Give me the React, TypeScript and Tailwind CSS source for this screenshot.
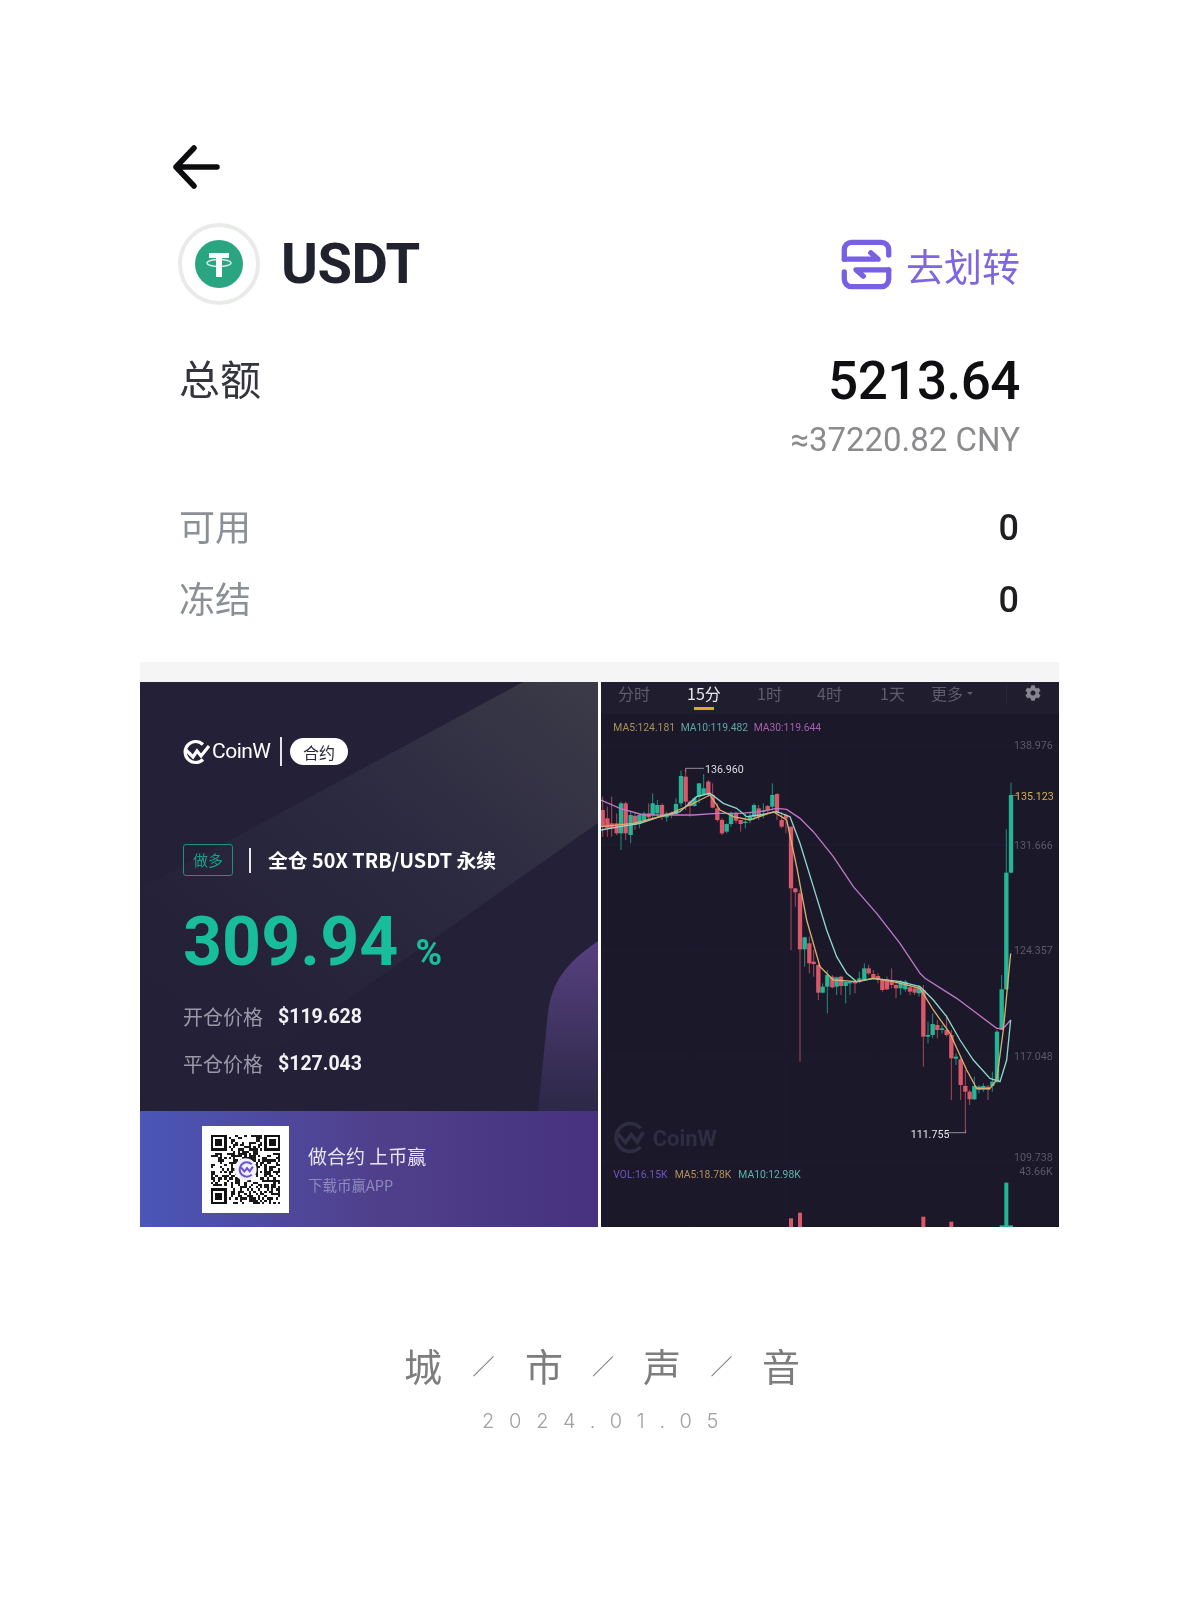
import { FaCog } from "react-icons/fa";

const SANS = "font-['Roboto','Noto_Sans_CJK_SC',sans-serif]";
const CJK = "font-['Noto_Sans_CJK_SC','Noto_Sans',sans-serif]";

type C = [number, number, number, number, number, "r" | "g"];
const L = 810;
const candles: C[] = [
  [8,350,470,390,440,"r"],[22,380,470,415,445,"r"],[35,350,470,430,445,"r"],[50,400,465,430,460,"r"],[63,365,510,370,460,"g"],[77,365,480,370,460,"r"],
  [92,395,490,405,465,"g"],[105,400,450,408,435,"r"],[118,400,445,405,430,"g"],[132,395,425,400,420,"g"],[146,370,420,400,412,"r"],[158,340,420,370,405,"g"],
  [172,360,410,375,400,"g"],[186,370,420,375,410,"r"],[200,395,425,400,412,"g"],[214,395,415,398,405,"r"],[228,355,405,372,402,"g"],[243,272,380,288,370,"g"],
  [257,265,390,290,365,"r"],[270,360,410,365,378,"r"],[283,350,380,355,378,"g"],[297,310,370,310,350,"g"],[311,282,345,325,345,"g"],[325,300,350,305,345,"r"],
  [338,310,385,345,383,"r"],[352,370,425,385,420,"r"],[366,415,465,420,460,"r"],[380,430,460,432,455,"g"],[393,395,440,400,432,"g"],[408,395,430,400,422,"r"],
  [422,420,455,420,432,"r"],[436,400,445,425,425,"g"],[450,395,430,410,420,"g"],[462,370,420,375,410,"g"],[476,375,420,385,410,"r"],[490,370,415,395,392,"g"],
  [503,375,400,378,392,"r"],[517,310,390,345,380,"g"],[531,340,420,342,400,"r"],[545,395,445,420,440,"r"],[558,400,460,405,415,"r"],[573,440,810,440,625,"r"],
  [586,625,680,625,637,"r"],[600,630,1145,640,808,"r"],[614,770,860,772,808,"g"],[628,770,880,790,850,"r"],[641,810,890,845,852,"r"],
  [655,L+40,L+150,L+45,L+128,"r"],[668,L+100,L+130,L+110,L+128,"g"],[682,L+60,L+190,L+75,L+110,"g"],[697,L+75,L+115,L+80,L+112,"r"],[710,L+80,L+135,L+82,L+110,"g"],
  [723,L+78,L+135,L+80,L+108,"r"],[737,L+95,L+160,L+96,L+108,"g"],[750,L+95,L+135,L+96,L+100,"g"],[765,L+90,L+130,L+95,L+100,"r"],[778,L+65,L+100,L+85,L+95,"g"],
  [793,L+40,L+90,L+55,L+90,"g"],[806,L+45,L+75,L+55,L+70,"r"],[820,L+60,L+90,L+72,L+85,"r"],[834,L+70,L+100,L+78,L+90,"r"],[847,L+85,L+125,L+88,L+120,"r"],
  [861,L+80,L+120,L+88,L+118,"r"],[875,L+55,L+115,L+90,L+105,"r"],[888,L+90,L+145,L+105,L+115,"r"],[902,L+90,L+135,L+95,L+115,"g"],[916,L+90,L+125,L+95,L+118,"g"],
  [930,L+105,L+135,L+112,L+125,"r"],[944,L+108,L+135,L+115,L+128,"r"],[957,L+105,L+140,L+112,L+130,"g"],[970,L+105,L+350,L+120,L+260,"r"],[984,L+215,L+280,L+255,L+260,"g"],
  [998,L+190,L+265,L+222,L+255,"g"],[1012,L+210,L+265,L+225,L+240,"r"],[1026,L+225,L+250,L+235,L+240,"g"],[1040,L+195,L+260,L+240,L+255,"r"],[1054,L+240,L+450,L+255,L+325,"r"],
  [1068,L+310,L+345,L+320,L+326,"g"],[1082,L+320,L+450,L+328,L+405,"r"],[1096,L+360,L+550,L+408,L+425,"r"],[1109,L+420,L+465,L+425,L+448,"r"],[1123,L+380,L+450,L+408,L+448,"g"],
  [1137,L+405,L+430,L+410,L+420,"g"],[1150,L+400,L+425,L+408,L+420,"g"],[1164,L+405,L+450,L+410,L+420,"r"],[1177,L+365,L+425,L+395,L+408,"g"],[1191,L+240,L+400,L+245,L+395,"g"],
  [1205,L+75,L+240,L+118,L+240,"g"],[1219,448,L+120,578,L+118,"g"],[1233,308,580,345,578,"g"],
];
const pts = (a: number[][]) => a.map((p) => p.join(",")).join(" ");
const ma30 = [[3,360],[60,385],[130,405],[200,405],[280,405],[350,400],[420,400],[480,395],[530,385],[560,388],[600,415],[640,455],[700,530],[760,620],[830,700],[900,790],[960,880],[975,895],[1070,955],[1130,1000],[1190,1045],[1210,1045],[1232,1020]];
const ma10 = [[3,450],[60,440],[120,430],[180,410],[240,395],[290,350],[330,340],[370,370],[410,385],[440,410],[480,405],[530,395],[570,410],[600,490],[640,620],[680,750],[710,830],[740,880],[770,905],[820,895],[900,905],[960,920],[1000,960],[1040,1010],[1080,1080],[1120,1140],[1170,1195],[1200,1205],[1220,1140],[1232,1020]];
const ma5 = [[3,440],[100,430],[200,405],[270,375],[330,345],[360,390],[400,410],[450,420],[520,395],[560,420],[590,560],[620,720],[660,860],[700,900],[770,905],[820,895],[880,905],[960,925],[1000,990],[1050,1060],[1100,1170],[1130,1225],[1170,1225],[1190,1200],[1210,1050],[1232,820]];

function Chart() {
  return (
    <svg viewBox="3 102 1374 1539" className="w-[458px] h-[513px] block" fontFamily="Roboto, sans-serif" fontSize="32">
      {[197, 495, 812, 1128, 1445].map((y) => <line key={y} x1="3" x2="1377" y1={y} y2={y} stroke="#222037" strokeWidth="2" />)}
      {[270, 555, 820, 1105].map((x) => <line key={x} x1={x} x2={x} y1="102" y2="1641" stroke="#1f1d31" strokeWidth="2" />)}
      <g fontSize="31">
        <text x="40" y="152" fill="#a8945a">MA5:124.181</text>
        <text x="242" y="152" fill="#5fa9a5">MA10:119.482</text>
        <text x="461" y="152" fill="#a85fb0">MA30:119.644</text>
        <text x="40" y="1494" fill="#7258c0">VOL:16.15K</text>
        <text x="224" y="1494" fill="#b4925a">MA5:18.78K</text>
        <text x="415" y="1494" fill="#5fb3ad">MA10:12.98K</text>
      </g>
      <g textAnchor="end" fill="#5b5967">
        <text x="1358" y="208">138.976</text>
        <text x="1358" y="506">131.666</text>
        <text x="1358" y="823">124.357</text>
        <text x="1358" y="1139">117.048</text>
        <text x="1358" y="1443">109.738</text>
        <text x="1358" y="1486">43.66K</text>
      </g>
      <text x="1361" y="359" textAnchor="end" fill="#d6b04f">135.123</text>
      <line x1="1240" x2="1254" y1="346" y2="346" stroke="#d6b04f" strokeWidth="2" />
      <path d="M257 275V265H312" fill="none" stroke="#c9c9d0" strokeWidth="2" />
      <text x="315" y="279" fill="#dcdce0">136.960</text>
      <path d="M1097 1350V1358H1040" fill="none" stroke="#c9c9d0" strokeWidth="2" />
      <text x="932" y="1373" fill="#e4e4e8">111.755</text>
      <g fill="none" stroke="#2f2d42" strokeWidth="11">
        <path d="M122 1345A42 42 0 1 0 122 1400" />
        <path d="M54 1362L76 1388L94 1364L112 1386L130 1356" />
      </g>
      <text x="158" y="1399" fill="#2f2d42" fontSize="66" fontWeight="700">CoinW</text>
      {candles.map(([x, wt, wb, bt, bb, c], i) => {
        const col = c === "r" ? "#d9586a" : "#25b596";
        return (
          <g key={i}>
            <line x1={x} x2={x} y1={wt} y2={wb} stroke={col} strokeWidth="3" opacity="0.75" />
            <rect x={x - 6.5} y={Math.min(bt, bb)} width="13" height={Math.max(Math.abs(bb - bt), 4)} fill={col} />
          </g>
        );
      })}
      <polyline points={pts(ma30)} fill="none" stroke="#c078c8" strokeWidth="4" />
      <polyline points={pts(ma10)} fill="none" stroke="#8fd8cc" strokeWidth="4" />
      <polyline points={pts(ma5)} fill="none" stroke="#d8b070" strokeWidth="4" />
      {[[573,1615],[600,1598],[970,1610],[1054,1625]].map(([x, y]) => <rect key={x} x={x - 6} y={y} width="12" height={1641 - y} fill="#d9586a" />)}
      <rect x="1213" y="1508" width="12" height="133" fill="#25b596" />
      <rect x="1199" y="1636" width="40" height="5" fill="#25b596" />
    </svg>
  );
}

function Qr() {
  const n = 31;
  let s = 20240105;
  const rnd = () => { s = (s * 1664525 + 1013904223) >>> 0; return (s >>> 16) / 65535; };
  const cells: [number, number][] = [];
  const inF = (x: number, y: number) => (x < 8 && y < 8) || (x >= n - 8 && y < 8) || (x < 8 && y >= n - 8);
  for (let y = 0; y < n; y++) for (let x = 0; x < n; x++) if (!inF(x, y) && rnd() > 0.5) cells.push([x, y]);
  const finders = [[0, 0], [n - 7, 0], [0, n - 7]];
  return (
    <svg viewBox={`-4 -4 ${n + 8} ${n + 8}`} className="w-[87px] h-[87px] bg-white shrink-0 block" shapeRendering="crispEdges">
      {cells.map(([x, y]) => <rect key={`${x}-${y}`} x={x} y={y} width="1" height="1" fill="#1a1a1a" />)}
      {finders.map(([x, y]) => (
        <g key={`${x}${y}`}>
          <rect x={x + 0.5} y={y + 0.5} width="6" height="6" fill="none" stroke="#111" />
          <rect x={x + 2} y={y + 2} width="3" height="3" fill="#111" />
        </g>
      ))}
      <g shapeRendering="auto">
        <circle cx={n / 2} cy={n / 2} r="5" fill="#f3f1fb" />
        <path d="M18.3 13.2A3.2 3.2 0 1 0 18.3 17.8" fill="none" stroke="#6a52d8" strokeWidth="0.9" />
        <path d="M13.5 14.6L15 16.4L16.2 14.9L17.4 16.3L18.8 14.2" fill="none" stroke="#6a52d8" strokeWidth="0.9" />
      </g>
    </svg>
  );
}

function LeftPanel() {
  return (
    <div className={`relative w-[458px] h-[545px] bg-[#232038] flex flex-col overflow-hidden ${SANS}`}>
      <svg viewBox="0 0 458 429" className="absolute left-0 top-0 w-[458px] h-[429px]">
        <defs>
          <linearGradient id="bandG" x1="1" y1="0" x2="0" y2="1">
            <stop offset="0" stopColor="#3c3b48" />
            <stop offset="0.42" stopColor="#2c2a40" />
            <stop offset="0.8" stopColor="#242139" />
            <stop offset="1" stopColor="#232038" />
          </linearGradient>
          <linearGradient id="purpG" x1="0" y1="0" x2="0" y2="1">
            <stop offset="0" stopColor="#56407f" />
            <stop offset="1" stopColor="#2c2846" />
          </linearGradient>
        </defs>
        <polygon points="383,0 458,0 458,141 140,365 0,365 0,207" fill="url(#bandG)" />
        <path d="M458 259C425 282 412 300 408 330L398 429H458Z" fill="url(#purpG)" />
      </svg>
      <div className="relative h-[429px] pl-[42px] flex flex-col">
        <div className="mt-[55px] h-[29px] flex items-center">
          <svg viewBox="0 0 28 28" className="w-[28px] h-[28px]">
            <path d="M21 6.5A10.5 10.5 0 1 0 21 21.5" fill="none" stroke="#fff" strokeWidth="3.2" />
            <path d="M4 12L11 19L15 13L19 18L27 8" fill="none" stroke="#fff" strokeWidth="3.2" />
          </svg>
          <span className="ml-[2px] text-white text-[21px] tracking-[-0.5px] w-[63px]">CoinW</span>
          <div className="ml-[5px] w-[2px] h-[29px] bg-[#e5e5ea]" />
          <div className={`ml-[8px] w-[58px] h-[27px] rounded-full bg-white text-[#2a2838] text-[16px] flex items-center justify-center ${CJK}`}>合约</div>
        </div>
        <div className="mt-[78px] ml-[1px] h-[32px] flex items-center">
          <div className={`w-[50px] h-[32px] border border-[#1f8f84] rounded-[3px] text-[#1c9c89] text-[15px] flex items-center justify-center ${CJK}`}>做多</div>
          <div className="ml-[16px] w-[2px] h-[25px] bg-[#e8e8ee]" />
          <div className={`ml-[17px] text-white text-[19.8px] font-bold whitespace-nowrap ${CJK}`}>全仓 50X TRB/USDT 永续</div>
        </div>
        <div className="mt-[30px] ml-[1px] h-[72px] flex items-baseline text-[#18bd9b] font-bold">
          <span className="text-[68px] leading-[72px] tracking-[0.1px]">309.94</span>
          <span className="ml-[17px] text-[36px] leading-[36px]">%</span>
        </div>
        <div className="mt-[24px] ml-[1px] h-[30px] flex items-center">
          <span className={`text-[#9a99a8] text-[20px] w-[95px] ${CJK}`}>开仓价格</span>
          <span className="text-[#f2f2f5] text-[19.5px] font-bold">$119.628</span>
        </div>
        <div className="mt-[17px] ml-[1px] h-[30px] flex items-center">
          <span className={`text-[#9a99a8] text-[20px] w-[95px] ${CJK}`}>平仓价格</span>
          <span className="text-[#f2f2f5] text-[19.5px] font-bold">$127.043</span>
        </div>
      </div>
      <div className="relative h-[116px] bg-gradient-to-r from-[#4a56b8] via-[#50408c] to-[#46327e] pl-[62px] flex items-center">
        <Qr />
        <div className={`ml-[19px] ${CJK}`}>
          <div className="text-[#e6e5f0] text-[19px] leading-[26px] whitespace-nowrap">做合约 上币赢</div>
          <div className="mt-[6px] text-[#8d8bbf] text-[14.5px] leading-[20px]">下载币赢APP</div>
        </div>
      </div>
    </div>
  );
}

function RightPanel() {
  return (
    <div className={`w-[458px] h-[545px] bg-[#1a1829] flex flex-col overflow-hidden ${SANS}`}>
      <div className={`h-[32px] bg-[#1f1d2e] flex items-start text-[16px] text-[#5f5d6b] leading-[22px] ${CJK}`}>
        <span className="ml-[17px] w-[69px]">分时</span>
        <span className="relative w-[70px] text-[#e8e8ec]">
          15分
          <span className="absolute left-[7px] top-[25px] w-[20px] h-[3px] bg-[#e0a92e]" />
        </span>
        <span className="w-[60px]">1时</span>
        <span className="w-[63px]">4时</span>
        <span className="w-[51px]">1天</span>
        <span className="w-[45px] flex items-center gap-[4px]">
          更多
          <span className="w-0 h-0 border-x-[3px] border-x-transparent border-t-[3px] border-t-[#5f5d6b]" />
        </span>
        <span className="ml-[30px] mt-[2px] w-[1px] h-[20px] bg-[#2a2838]" />
        <FaCog className="ml-[18px] mt-[3px] text-[#85848f]" size={16} />
      </div>
      <Chart />
    </div>
  );
}

function Row({ label, value, mt }: { label: string; value: string; mt: string }) {
  return (
    <div className={`flex items-center justify-between h-[44px] ${mt}`}>
      <span className={`text-[36px] text-[#8b9096] ${CJK}`}>{label}</span>
      <span className={`text-[36px] pt-[6px] font-medium text-[#1d1d22] mr-[1px] ${SANS}`}>{value}</span>
    </div>
  );
}

export default function App() {
  return (
    <div className={`w-[1200px] h-[1600px] bg-white flex flex-col blur-[0.4px] ${SANS}`}>
      <div className="pl-[172px] pt-[145px]">
        <svg viewBox="0 0 48 44" className="w-[48px] h-[44px] block" fill="none" stroke="#0c0c0e" strokeWidth="5.5" strokeLinecap="round" strokeLinejoin="round">
          <path d="M45 22H4M22 3L4 22L22 41" />
        </svg>
      </div>
      <div className="mt-[34px] ml-[178px] mr-[180px] h-[82px] flex items-center justify-between">
        <div className="flex items-center">
          <div className="w-[82px] h-[82px] rounded-full bg-white border-[4px] border-[#e9ebe9] flex items-center justify-center">
            <svg viewBox="0 0 48 48" className="w-[48px] h-[48px]">
              <circle cx="24" cy="24" r="24" fill="#2aa582" />
              <path d="M14 13H34V18H27V37H21V18H14Z" fill="#fff" />
              <ellipse cx="24" cy="23" rx="12" ry="3.5" fill="none" stroke="#fff" strokeWidth="1.5" opacity="0.8" />
            </svg>
          </div>
          <span className="ml-[21px] text-[56px] leading-[64px] font-bold text-[#20222e] tracking-[-0.5px]">USDT</span>
        </div>
        <div className="flex items-center">
          <svg viewBox="0 0 52 52" className="w-[55px] h-[55px] block" fill="none" stroke="#7760e2" strokeWidth="5" strokeLinecap="round" strokeLinejoin="round">
            <path d="M5 21V12A7 7 0 0 1 12 5H40A7 7 0 0 1 47 12V17" />
            <path d="M5 21H37L30 15" />
            <path d="M47 31H16L23 37" />
            <path d="M47 31V40A7 7 0 0 1 40 47H12A7 7 0 0 1 5 40V33" />
          </svg>
          <span className={`ml-[12px] text-[38px] text-[#7f66e0] ${CJK}`}>去划转</span>
        </div>
      </div>
      <div className="mt-[47px] ml-[179px] mr-[180px] flex justify-between items-start h-[50px]">
        <span className={`text-[41px] leading-[50px] text-[#33343c] ${CJK}`}>总额</span>
        <span className="mt-[4px] text-[53px] leading-[50px] font-medium text-[#0f0f12] tracking-[-0.5px]">5213.64</span>
      </div>
      <div className="mt-[18px] mr-[180px] text-right text-[33px] leading-[40px] text-[#8b8b8e]">≈37220.82 CNY</div>
      <div className="ml-[179px] mr-[180px]">
        <Row label="可用" value="0" mt="mt-[43px]" />
        <Row label="冻结" value="0" mt="mt-[28px]" />
      </div>
      <div className="mt-[43px] ml-[140px] w-[919px] h-[20px] bg-[#f5f5f5]" />
      <div className="ml-[140px] w-[919px] flex gap-[3px]">
        <LeftPanel />
        <RightPanel />
      </div>
      <div className={`mt-[113px] ml-[404px] h-[48px] flex items-center text-[38px] text-[#7d7d7d] ${CJK}`}>
        <span className="w-[38px]">城</span>
        <span className="w-[83px] text-center text-[22px]">／</span>
        <span className="w-[38px]">市</span>
        <span className="w-[80px] text-center text-[22px]">／</span>
        <span className="w-[38px]">声</span>
        <span className="w-[81px] text-center text-[22px]">／</span>
        <span className="w-[38px]">音</span>
      </div>
      <div className="mt-[20px] ml-[482px] text-[20px] leading-[26px] tracking-[14.8px] text-[#a0a0a0] font-['Inter',sans-serif] font-light">2024.01.05</div>
    </div>
  );
}
